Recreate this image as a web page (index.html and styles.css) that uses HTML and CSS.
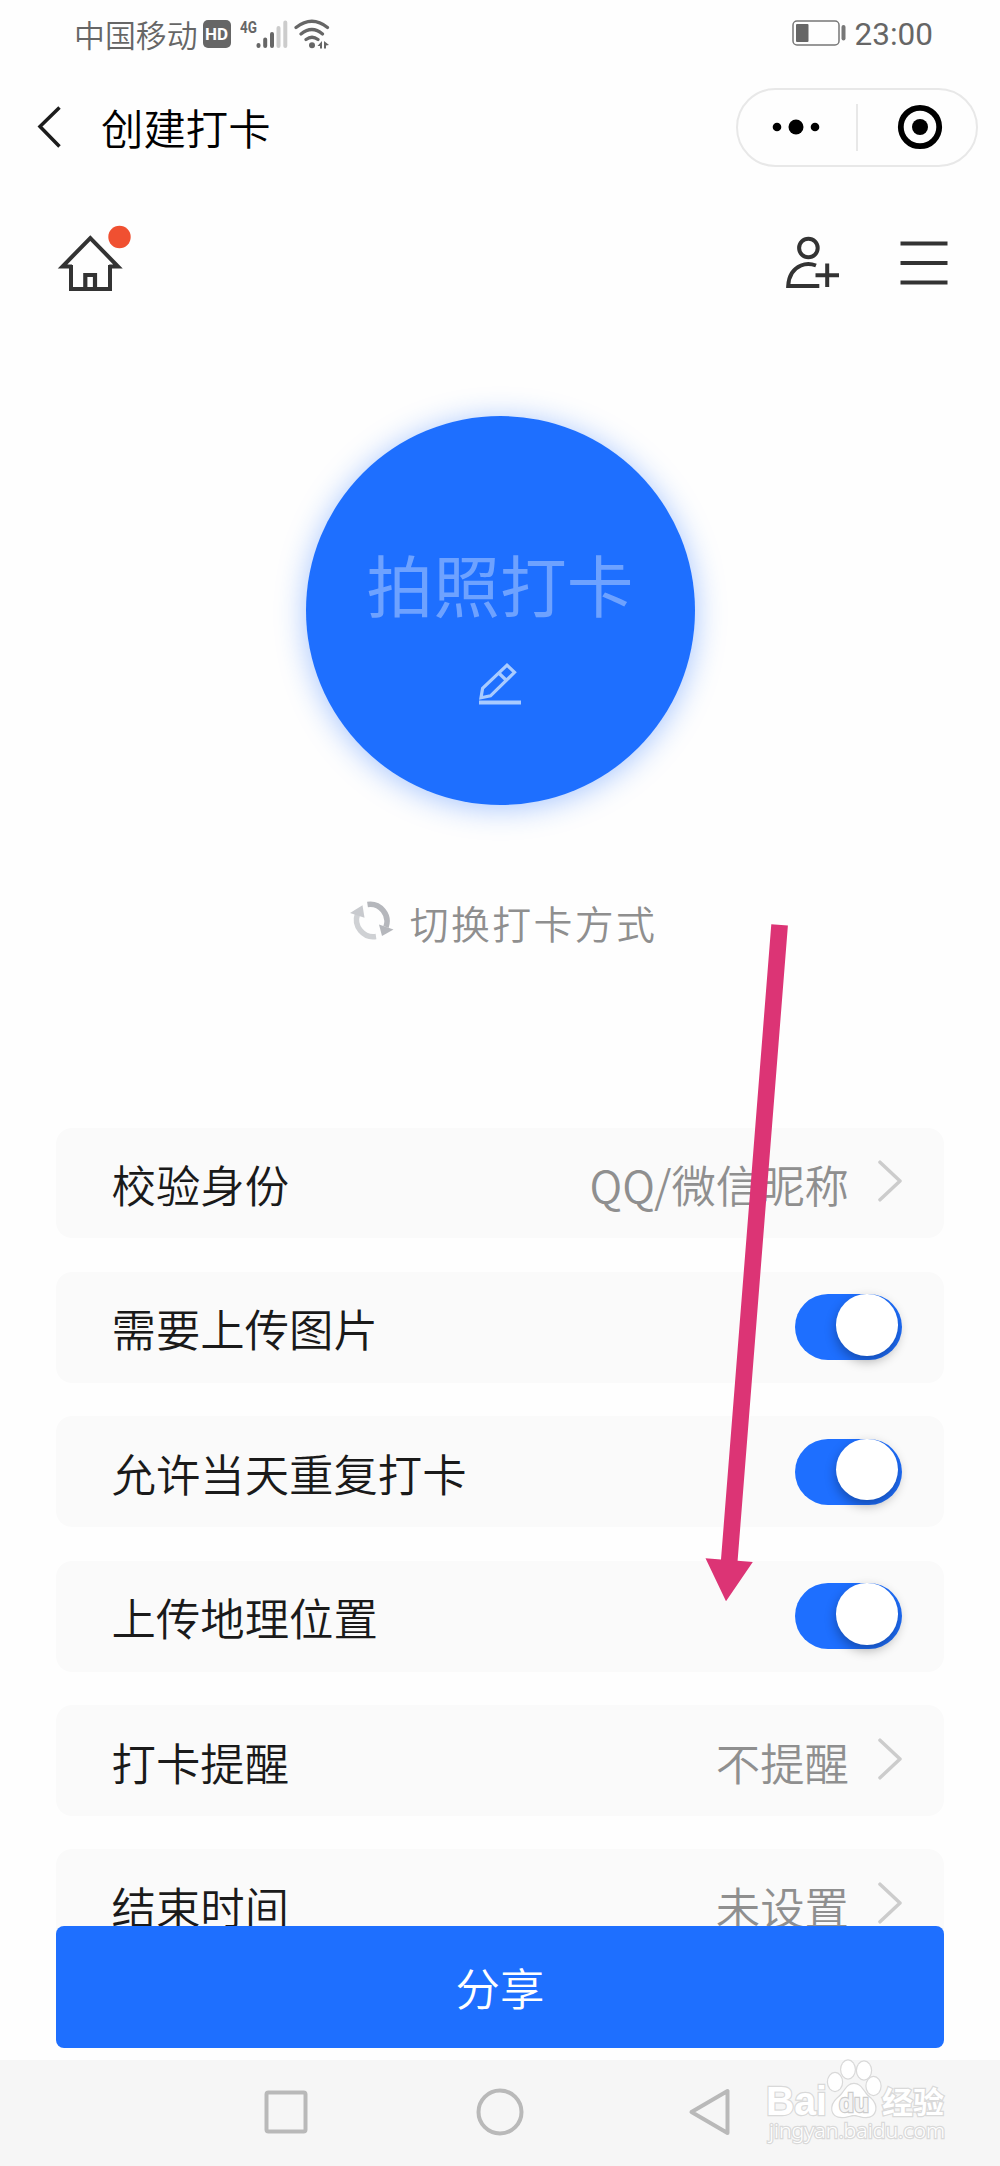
FILE: index.html
```html
<!DOCTYPE html>
<html lang="zh-CN">
<head>
<meta charset="utf-8">
<title>创建打卡</title>
<link rel="stylesheet" href="styles.css">
</head>
<body>
<header class="status">
  <span class="carrier">中国移动</span>
  <span class="hd">HD</span>
  <svg class="signal" width="50" height="32" viewBox="0 0 50 32">
    <text x="0" y="15" textLength="17" lengthAdjust="spacingAndGlyphs" class="net">4G</text>
    <g stroke="#666" stroke-width="4" stroke-linecap="round">
      <path d="M18.5 27v1M25.2 21.500v6.500M32 16v12"/>
      <path stroke="#ccc" d="M38.500 10v18M45.300 4.500v23.500"/>
    </g>
  </svg>
  <svg class="wifi" width="36" height="32" viewBox="0 0 36 32">
    <g fill="none" stroke="#666" stroke-width="3.200" stroke-linecap="round">
      <path d="M2 9.500Q18 -3 33.500 9.500M7 16Q18 7 28.500 16M12 21.500Q18 17 24 21.500"/>
    </g>
    <circle cx="18" cy="27.200" r="3" fill="#666"/>
    <path fill="#666" d="M28 23v7.500h-2v-2.500h-2.500zM30 23l5 4-3 .5v3h-2z"/>
  </svg>
  <svg class="battery" width="54" height="28" viewBox="0 0 54 28">
    <rect x="1" y="1" width="46" height="24" rx="4" fill="none" stroke="#777" stroke-width="1.500"/>
    <rect x="4" y="4" width="12.500" height="18" rx="1" fill="#666"/>
    <rect x="49.500" y="5" width="4" height="15.500" rx="2" fill="#777"/>
  </svg>
  <time class="clock">23:00</time>
</header>

<div class="titlebar">
  <svg class="back" width="26" height="44" viewBox="0 0 26 44"><path d="M22.500 2.500L3 21.500 22.500 41.500" fill="none" stroke="#1c1c1c" stroke-width="3.500"/></svg>
  <h1 class="title">创建打卡</h1>
  <div class="capsule">
    <svg class="dots" width="48" height="18" viewBox="0 0 48 18"><circle cx="5" cy="9" r="4.300"/><circle cx="24" cy="9" r="7.500"/><circle cx="43" cy="9" r="4.300"/></svg>
    <i class="divider"></i>
    <svg class="target" width="46" height="46" viewBox="0 0 46 46"><circle cx="23" cy="23" r="19.200" fill="none" stroke="#000" stroke-width="5.800"/><circle cx="23" cy="23" r="8"/></svg>
  </div>
</div>

<nav class="tools">
  <svg class="home" width="76" height="70" viewBox="0 0 76 70">
    <g fill="none" stroke="#333" stroke-width="4">
      <path d="M16 41.500H6.500L34.300 13 62 41.500H53.200"/>
      <path d="M15 40V64H54V40"/>
      <path d="M29.300 63V50H39V63" stroke-width="4.200"/>
    </g>
    <circle cx="63.500" cy="12" r="11.200" fill="#f05031"/>
  </svg>
  <svg class="invite" width="56" height="54" viewBox="0 0 56 54">
    <g fill="none" stroke="#333" stroke-width="4">
      <circle cx="24.400" cy="13" r="9.300"/>
      <path d="M32 30.500Q24 27.500 17 30.500Q5 35.500 4.200 51H35.300"/>
      <path d="M31.500 40.200H55M43.200 28.500V52"/>
    </g>
  </svg>
  <svg class="menu" width="48" height="44" viewBox="0 0 48 44"><path d="M.5 2.500H47.500M.5 22H47.500M.5 41.500H47.500" stroke="#333" stroke-width="4.200"/></svg>
</nav>

<main class="page">
  <section class="hero">
    <div class="punch">
      <span class="punch-name">拍照打卡</span>
      <svg class="pencil" width="42" height="44" viewBox="0 0 42 44">
        <g fill="none" stroke="#a9cbff" stroke-width="3.200">
          <path d="M28 3.200L35.500 10.300 11.500 33.800 2 35.800 3.600 26.400ZM20.300 11.500L27.500 18.500"/>
          <path d="M0 40.500H42" stroke-width="3.800"/>
        </g>
      </svg>
    </div>
    <div class="switch-mode">
      <svg class="cycle" width="44" height="40" viewBox="0 0 44 40">
        <path d="M17.500 3.500A17 17 0 0 1 36 26" fill="none" stroke="#b5b7bc" stroke-width="5.500"/>
        <path d="M29 23.500L43.500 28.500 32 35Z" fill="#b5b7bc"/>
        <path d="M26 35.500A17 17 0 0 1 7.500 13" fill="none" stroke="#cfd1d4" stroke-width="5.500"/>
        <path d="M0 12L12.500 4.300 14.500 16.800Z" fill="#c8cace"/>
      </svg>
      <span>切换打卡方式</span>
    </div>
  </section>

  <section class="list">
    <div class="row"><span>校验身份</span><span class="value">QQ/微信昵称</span><svg class="chev" viewBox="0 0 24 42"><path d="M2 2.200L22 21 2 39.800"/></svg></div>
    <div class="row"><span>需要上传图片</span><span class="toggle"></span></div>
    <div class="row"><span>允许当天重复打卡</span><span class="toggle"></span></div>
    <div class="row"><span>上传地理位置</span><span class="toggle"></span></div>
    <div class="row"><span>打卡提醒</span><span class="value">不提醒</span><svg class="chev" viewBox="0 0 24 42"><path d="M2 2.200L22 21 2 39.800"/></svg></div>
    <div class="row"><span>结束时间</span><span class="value">未设置</span><svg class="chev" viewBox="0 0 24 42"><path d="M2 2.200L22 21 2 39.800"/></svg></div>
  </section>
  <div class="share">分享</div>
</main>

<footer class="sysnav">
  <svg width="46" height="50" viewBox="0 0 46 50"><rect x="3.500" y="5.500" width="39" height="39" rx="2" /></svg>
  <svg width="50" height="50" viewBox="0 0 50 50"><circle cx="25" cy="25" r="21.500"/></svg>
  <svg width="46" height="50" viewBox="0 0 46 50"><path d="M36.500 4V46L0.500 25Z"/></svg>
</footer>

<svg class="watermark" width="190" height="96" viewBox="0 0 190 96">
  <g class="wm">
    <text x="5" y="59" font-size="40" font-weight="700" textLength="61" lengthAdjust="spacingAndGlyphs">Bai</text>
    <ellipse cx="74" cy="26" rx="7" ry="9"/><ellipse cx="87" cy="13.500" rx="6.800" ry="9"/><ellipse cx="103" cy="14.500" rx="7" ry="9"/><ellipse cx="112.500" cy="30" rx="7" ry="9"/>
    <path d="M93 28C101 28 102 37 109 42C118 50 115 61 105 61C99 61 97 59 93 59C89 59 87 61 81 61C70 61 68 50 77 42C84 37 85 28 93 28Z"/>
    <text class="du" x="78" y="56" font-size="25" font-weight="700" textLength="30" lengthAdjust="spacingAndGlyphs">du</text>
    <text x="121" y="57" font-size="30" font-weight="700" class="cjk" textLength="62" lengthAdjust="spacingAndGlyphs">经验</text>
    <text x="8" y="82" font-size="20" class="url" textLength="176" lengthAdjust="spacingAndGlyphs">jingyan.baidu.com</text>
  </g>
</svg>
<svg class="pointer" width="90" height="690" viewBox="700 920 90 690"><path fill="#dc3475" d="M771.300 924.200L787.900 925.500 737.600 1560.800 752.800 1562 726 1601.200 705.500 1558.200 721 1559.400Z"/></svg>
</body>
</html>
```

FILE: styles.css
```css
* { box-sizing: border-box; }
body {
  position: relative;
  display: flex;
  flex-direction: column;
  width: 1000px;
  height: 2166px;
  margin: 0;
  overflow: hidden;
  background: #fefefe;
  color: #1a1a1a;
  font-family: "Noto Sans CJK SC", sans-serif;
  font-weight: 350;
}
svg { display: block; flex: none; }

.status {
  display: flex;
  flex: none;
  align-items: center;
  height: 67px;
  padding: 0 67px 0 74px;
  color: #666;
}
.carrier { font-size: 30.9px; line-height: 44px; }
.hd {
  width: 28px;
  height: 28px;
  margin-left: 5px;
  border-radius: 5px;
  background: #666;
  color: #fff;
  font: 700 17px/28px Roboto, sans-serif;
  text-align: center;
}
.signal { margin-left: 9px; }
.net { fill: #666; font: 700 17px Roboto, sans-serif; }
.wifi { margin-left: 4px; }
.battery { margin-left: auto; }
.clock {
  margin-left: 9px;
  font: 400 31.5px/40px Roboto, sans-serif;
  padding-top: 2px;
}

.titlebar {
  display: flex;
  flex: none;
  align-items: center;
  height: 120px;
  padding: 0 22px 0 37px;
}
.title {
  margin: 0 0 0 38px;
  color: #000;
  font-size: 42.4px;
  font-weight: 350;
  line-height: 60px;
}
.capsule {
  display: flex;
  align-items: center;
  width: 242px;
  height: 79px;
  margin-left: auto;
  padding: 0 32px 0 34px;
  border: 2px solid #e8e8e8;
  border-radius: 40px;
}
.divider { width: 2px; height: 47px; margin: 0 39px 0 36px; background: #e8e8e8; }

.tools {
  display: flex;
  flex: none;
  height: 117px;
  padding: 38px 52px 0 56px;
}
.invite { margin: 10px 0 0 652px; }
.menu { margin: 16px 0 0 60px; }

.page {
  display: flex;
  flex: 1;
  flex-direction: column;
  padding: 112px 56px 12px;
}
.hero { display: flex; flex-direction: column; align-items: center; height: 711.500px; }
.punch {
  display: flex;
  flex-direction: column;
  align-items: center;
  width: 389px;
  height: 389px;
  padding-top: 119px;
  border-radius: 50%;
  background: #1e6fff;
  box-shadow: 0 3px 30px rgba(30, 111, 255, .4);
}
.punch-name { color: #6ea2ff; font-size: 66.700px; font-weight: 400; line-height: 97px; }
.pencil { margin-top: 30px; }
.switch-mode {
  display: flex;
  align-items: center;
  margin: 87px 0 0 7px;
  color: #8f8f8f;
  font-size: 38.900px;
  letter-spacing: 2.400px;
  line-height: 60px;
}
.cycle { margin: 0 16px 2px 0; }

.list {
  display: flex;
  flex-direction: column;
  gap: 33.500px;
  height: 806px;
  overflow: hidden;
}
.row {
  display: flex;
  flex: none;
  align-items: center;
  height: 110.900px;
  padding: 0 42px 0 55.500px;
  border-radius: 16px;
  background: #fafafa;
  font-size: 44.400px;
  line-height: 64px;
}
.row span:not(.toggle) { padding-top: 2px; }
.value { margin-left: auto; color: #8f8f8f; }
.chev { width: 24px; height: 42px; margin: 0 0 4px 29px; fill: none; stroke: #ccc; stroke-width: 3.500; stroke-linecap: round; stroke-linejoin: round; }
.toggle {
  width: 107px;
  height: 66px;
  margin-left: auto;
  padding-left: 41px;
  border-radius: 33px;
  background: #1e6fff;
}
.toggle::before {
  display: block;
  width: 61.500px;
  height: 61.500px;
  border-radius: 50%;
  background: #fff;
  box-shadow: 0 5px 12px rgba(0, 0, 0, .32);
  content: "";
}
.share {
  position: relative;
  flex: none;
  height: 122px;
  margin-top: -8px;
  border-radius: 8px;
  background: #1e6fff;
  color: #fff;
  font-size: 44.400px;
  line-height: 122px;
  text-align: center;
}

.sysnav {
  display: flex;
  flex: none;
  align-items: center;
  justify-content: space-between;
  height: 107.500px;
  padding: 0 263px 2px;
  background: #f6f6f6;
}
.sysnav svg { overflow: visible; fill: none; stroke: #b9b9b9; stroke-width: 4; stroke-linejoin: round; }

.watermark { position: absolute; left: 761px; top: 2056px; }
.wm { fill: #fff; stroke: #d9d9d9; stroke-width: 2.400; paint-order: stroke; font-family: "Liberation Sans", sans-serif; }
.wm .cjk { font-family: "Noto Sans CJK SC", sans-serif; }
.wm .du { fill: #f4f4f4; stroke: #ccc; }
.wm .url { font-family: "Noto Sans", sans-serif; }
.pointer { position: absolute; left: 700px; top: 920px; }
```
